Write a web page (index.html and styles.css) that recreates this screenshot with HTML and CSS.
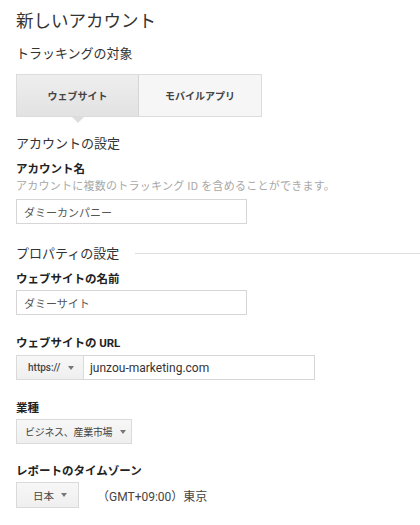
FILE: index.html
```html
<!DOCTYPE html>
<html lang="ja">
<head>
<meta charset="utf-8">
<title>新しいアカウント</title>
<link rel="stylesheet" href="styles.css">
</head>
<body>
<div class="page">
  <h1 class="title">新しいアカウント</h1>
  <h2 class="heading heading-first">トラッキングの対象</h2>
  <div class="tabs">
    <div class="tab tab-active">ウェブサイト</div>
    <div class="tab">モバイルアプリ</div>
  </div>

  <h2 class="heading heading-account">アカウントの設定</h2>
  <div class="field field-account">
    <div class="label">アカウント名</div>
    <div class="hint">アカウントに複数のトラッキング ID を含めることができます。</div>
    <div class="input input-name input-after-hint">ダミーカンパニー</div>
  </div>

  <h2 class="heading heading-rule">プロパティの設定</h2>
  <div class="field field-first">
    <div class="label">ウェブサイトの名前</div>
    <div class="input input-name">ダミーサイト</div>
  </div>

  <div class="field">
    <div class="label">ウェブサイトの <span class="latin">URL</span></div>
    <div class="url-group">
      <div class="select select-proto"><span class="latin">https://</span><span class="caret"></span></div>
      <div class="url-input latin">junzou-marketing.com</div>
    </div>
  </div>

  <div class="field">
    <div class="label">業種</div>
    <div class="select select-industry">ビジネス、産業市場<span class="caret"></span></div>
  </div>

  <div class="field field-tz">
    <div class="label">レポートのタイムゾーン</div>
    <div class="tz-row">
      <div class="select select-country">日本<span class="caret"></span></div>
      <div class="tz-text">（<span class="latin">GMT+09:00</span>）東京</div>
    </div>
  </div>
</div>
</body>
</html>
```
FILE: styles.css
```css
html, body {
  margin: 0;
  padding: 0;
  background: #ffffff;
}
body {
  font-family: "Noto Sans CJK JP", "Noto Sans", sans-serif;
  color: #333333;
}
.latin {
  font-family: Roboto, "Noto Sans CJK JP", sans-serif;
}
.page {
  padding: 0 16px;
  width: 420px;
  box-sizing: border-box;
}
.title {
  margin: 8px 0 0;
  font-size: 17.5px;
  line-height: 24px;
  font-weight: normal;
  color: #333;
}
.heading {
  margin: 0;
  font-size: 13px;
  line-height: 18px;
  font-weight: normal;
  color: #333;
}
.heading-first { margin-top: 12px; }
.heading-account { margin-top: 17px; }
.heading-rule {
  margin-top: 20px;
  display: flex;
  align-items: center;
}
.heading-rule::after {
  content: "";
  flex: 1;
  height: 1px;
  background: #dedede;
  margin-left: 16px;
  margin-right: -16px;
}

.tabs {
  margin-top: 12px;
  display: flex;
  width: 246px;
  height: 43px;
  border: 1px solid #dcdcdc;
  box-sizing: border-box;
}
.tab {
  flex: 0 0 123px;
  display: flex;
  align-items: center;
  justify-content: center;
  font-size: 10px;
  font-weight: bold;
  color: #444;
  background: #f6f6f6;
  position: relative;
}
.tab + .tab { flex: 1; }
.tab-active {
  flex: 0 0 121px;
  background: linear-gradient(#eeeeee, #e2e2e2);
  border-right: 1px solid #d6d6d6;
}
.tab-active::after {
  content: "";
  position: absolute;
  left: 50%;
  bottom: -7px;
  margin-left: -6px;
  border-left: 6px solid transparent;
  border-right: 6px solid transparent;
  border-top: 6px solid #dddddd;
}

.field { margin-top: 19px; }
.field-account { margin-top: 8px; }
.field-first { margin-top: 8px; }
.field-tz { margin-top: 18px; }

.label {
  font-size: 11.5px;
  line-height: 16px;
  font-weight: bold;
  color: #222;
}
.hint {
  margin-top: 1px;
  font-size: 11px;
  line-height: 16px;
  letter-spacing: 0.25px;
  color: #a8a8a8;
  white-space: nowrap;
}
.input {
  margin-top: 4px;
  height: 25px;
  border: 1px solid #d6d6d6;
  box-sizing: border-box;
  padding: 0 7px;
  display: flex;
  align-items: center;
  font-size: 11px;
  color: #555;
}
.input-after-hint { margin-top: 6px; }
.input-name { width: 231px; }

.url-group {
  margin-top: 4px;
  display: flex;
  width: 299px;
  height: 25px;
  box-sizing: border-box;
}
.url-input {
  flex: 1;
  border: 1px solid #d6d6d6;
  border-left: none;
  display: flex;
  align-items: center;
  padding-left: 6px;
  font-size: 12px;
  color: #333;
}

.select {
  margin-top: 4px;
  height: 25px;
  box-sizing: border-box;
  border: 1px solid #dadada;
  background: linear-gradient(#f7f7f7, #efefef);
  display: inline-flex;
  align-items: center;
  font-size: 10.5px;
  color: #444;
  white-space: nowrap;
}
.caret {
  display: inline-block;
  flex: none;
  width: 0;
  height: 0;
  border-left: 3.5px solid transparent;
  border-right: 3.5px solid transparent;
  border-top: 4px solid #777;
}
.select-proto {
  margin-top: 0;
  width: 68px;
  height: 25px;
  padding-left: 11px;
  font-size: 10px;
  font-weight: 500;
}
.select-proto .caret { margin-left: 8px; }
.select-industry {
  width: 116px;
  padding-left: 8px;
  font-size: 10px;
  letter-spacing: -0.3px;
}
.select-industry .caret { margin-left: 8px; }
.select-country {
  margin-top: 0;
  width: 63px;
  height: 26px;
  padding-left: 16px;
}
.select-country .caret { margin-left: 7px; }

.tz-row {
  margin-top: 4px;
  display: flex;
  align-items: center;
}
.tz-text {
  margin-left: 18px;
  font-size: 12px;
  color: #444;
}
```
